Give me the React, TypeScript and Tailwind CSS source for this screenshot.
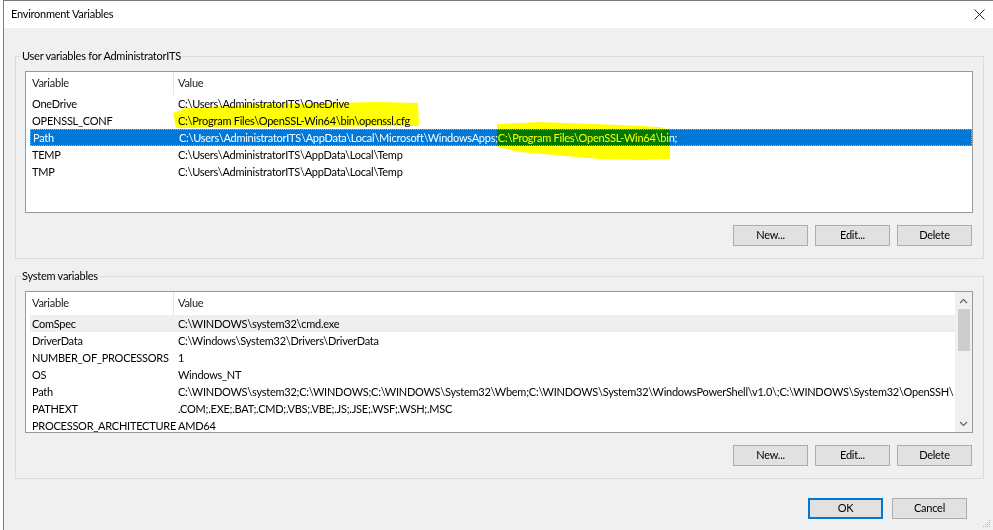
import React from "react";

const userVars = [
  { name: "OneDrive", value: "C:\\Users\\AdministratorITS\\OneDrive" },
  { name: "OPENSSL_CONF", value: "C:\\Program Files\\OpenSSL-Win64\\bin\\openssl.cfg" },
  { name: "Path", value: "C:\\Users\\AdministratorITS\\AppData\\Local\\Microsoft\\WindowsApps;C:\\Program Files\\OpenSSL-Win64\\bin;", selected: true },
  { name: "TEMP", value: "C:\\Users\\AdministratorITS\\AppData\\Local\\Temp" },
  { name: "TMP", value: "C:\\Users\\AdministratorITS\\AppData\\Local\\Temp" },
];

const systemVars = [
  { name: "ComSpec", value: "C:\\WINDOWS\\system32\\cmd.exe", hover: true },
  { name: "DriverData", value: "C:\\Windows\\System32\\Drivers\\DriverData" },
  { name: "NUMBER_OF_PROCESSORS", value: "1" },
  { name: "OS", value: "Windows_NT" },
  { name: "Path", value: "C:\\WINDOWS\\system32;C:\\WINDOWS;C:\\WINDOWS\\System32\\Wbem;C:\\WINDOWS\\System32\\WindowsPowerShell\\v1.0\\;C:\\WINDOWS\\System32\\OpenSSH\\" },
  { name: "PATHEXT", value: ".COM;.EXE;.BAT;.CMD;.VBS;.VBE;.JS;.JSE;.WSF;.WSH;.MSC" },
  { name: "PROCESSOR_ARCHITECTURE", value: "AMD64" },
];

type Row = { name: string; value: string; selected?: boolean; hover?: boolean };

function WinButton({ label, primary }: { label: string; primary?: boolean }) {
  return (
    <div
      className={`w-[75px] h-[21px] shrink-0 flex items-center justify-center bg-[#e1e1e1] border text-[#000] ${
        primary ? "border-[#0078d7] border-2" : "border-[#adadad]"
      }`}
    >
      {label}
    </div>
  );
}

function ListHeader() {
  return (
    <div className="h-[23px] flex items-center bg-white shrink-0">
      <div className="w-[147px] pl-[6px] text-[#1a1a1a]">Variable</div>
      <div className="w-px h-full bg-[#e5e5e5]" />
      <div className="pl-[4px] text-[#1a1a1a]">Value</div>
    </div>
  );
}

function ListRow({ row }: { row: Row }) {
  const bg = row.selected
    ? "bg-[#0078d7] text-white border border-dotted border-[#d9a766]"
    : row.hover
    ? "bg-[#efefef]"
    : "";
  return (
    <div className={`h-[17px] shrink-0 flex items-center pt-[2px] ml-[4px] whitespace-nowrap overflow-hidden ${bg}`}>
      <div className="w-[142px] pl-[2px] shrink-0">{row.name}</div>
      <div className="pl-[6px]">{row.value}</div>
    </div>
  );
}

function Scrollbar() {
  return (
    <div className="w-[17px] bg-[#f0f0f0] flex flex-col items-center shrink-0">
      <div className="h-[17px] flex items-center justify-center">
        <svg width="9" height="6" viewBox="0 0 9 6">
          <path d="M1 5 L4.5 1.5 L8 5" fill="none" stroke="#606060" strokeWidth="1.2" />
        </svg>
      </div>
      <div className="w-[12px] h-[42px] bg-[#cdcdcd]" />
      <div className="flex-1" />
      <div className="h-[17px] flex items-center justify-center">
        <svg width="9" height="6" viewBox="0 0 9 6">
          <path d="M1 1 L4.5 4.5 L8 1" fill="none" stroke="#606060" strokeWidth="1.2" />
        </svg>
      </div>
    </div>
  );
}

function Group({ title, rows, scroll }: { title: string; rows: Row[]; scroll?: boolean }) {
  return (
    <fieldset className="min-w-0 border border-[#dcdcdc] pl-[9px] pr-[10px] pt-[7px] pb-[12px]">
      <legend className="ml-[-4px] px-[1px] leading-[16px] text-[#000]">{title}</legend>
      <div className="h-[142px] border border-[#9a9a9a] bg-white flex overflow-hidden">
        <div className="flex-1 min-w-0 flex flex-col overflow-hidden">
          <ListHeader />
          {rows.map((r) => (
            <ListRow key={r.name + r.value} row={r} />
          ))}
        </div>
        {scroll && <Scrollbar />}
      </div>
      <div className="flex justify-end gap-[7px] mt-[12px] mr-[1px]">
        <WinButton label="New..." />
        <WinButton label="Edit..." />
        <WinButton label="Delete" />
      </div>
    </fieldset>
  );
}

export default function App() {
  return (
    <div className="relative w-[993px] h-[530px] flex bg-white overflow-hidden text-[11px] tracking-[-0.25px] text-black font-['Lato',sans-serif]">
      <div className="w-[3px] shrink-0 bg-white" />
      <div className="flex-1 min-w-0 flex flex-col border-l border-t border-[#7a7a7a]">
        <div className="h-[27px] bg-white flex items-center justify-between pl-[7px] pr-[8px] shrink-0">
          <span>Environment Variables</span>
          <svg width="11" height="11" viewBox="0 0 11 11">
            <path d="M0.5 0.5 L10.5 10.5 M10.5 0.5 L0.5 10.5" stroke="#222" strokeWidth="1" />
          </svg>
        </div>
        <div className="flex-1 min-w-0 bg-[#f0f0f0] pl-[11px] pr-[9px] pt-[20px] flex flex-col">
          <Group title="User variables for AdministratorITS" rows={userVars} />
          <div className="mt-[9px] min-w-0">
            <Group title="System variables" rows={systemVars} scroll />
          </div>
          <div className="flex justify-end gap-[9px] mt-[19px] pr-[17px]">
            <WinButton label="OK" primary />
            <WinButton label="Cancel" />
          </div>
        </div>
      </div>

      {/* highlighter marks over the screenshot */}
      <svg className="absolute inset-0 pointer-events-none mix-blend-multiply" width="993" height="530">
        <polygon
          points="173,113 186,108 260,104 380,102 418,103 419,126 300,127 176,128"
          fill="#ffff00"
        />
        <polygon
          points="497,124 540,122 620,125 660,127 670,130 670,159 640,160 600,159 520,152 497,147"
          fill="#ffff00"
        />
      </svg>

      <svg className="absolute right-[2px] bottom-[2px]" width="10" height="10" viewBox="0 0 10 10">
        <g fill="#b0b0b0">
          <rect x="8" y="2" width="1" height="1" />
          <rect x="6" y="4" width="1" height="1" />
          <rect x="8" y="4" width="1" height="1" />
          <rect x="4" y="6" width="1" height="1" />
          <rect x="6" y="6" width="1" height="1" />
          <rect x="8" y="6" width="1" height="1" />
          <rect x="2" y="8" width="1" height="1" />
          <rect x="4" y="8" width="1" height="1" />
          <rect x="6" y="8" width="1" height="1" />
          <rect x="8" y="8" width="1" height="1" />
        </g>
      </svg>
    </div>
  );
}
